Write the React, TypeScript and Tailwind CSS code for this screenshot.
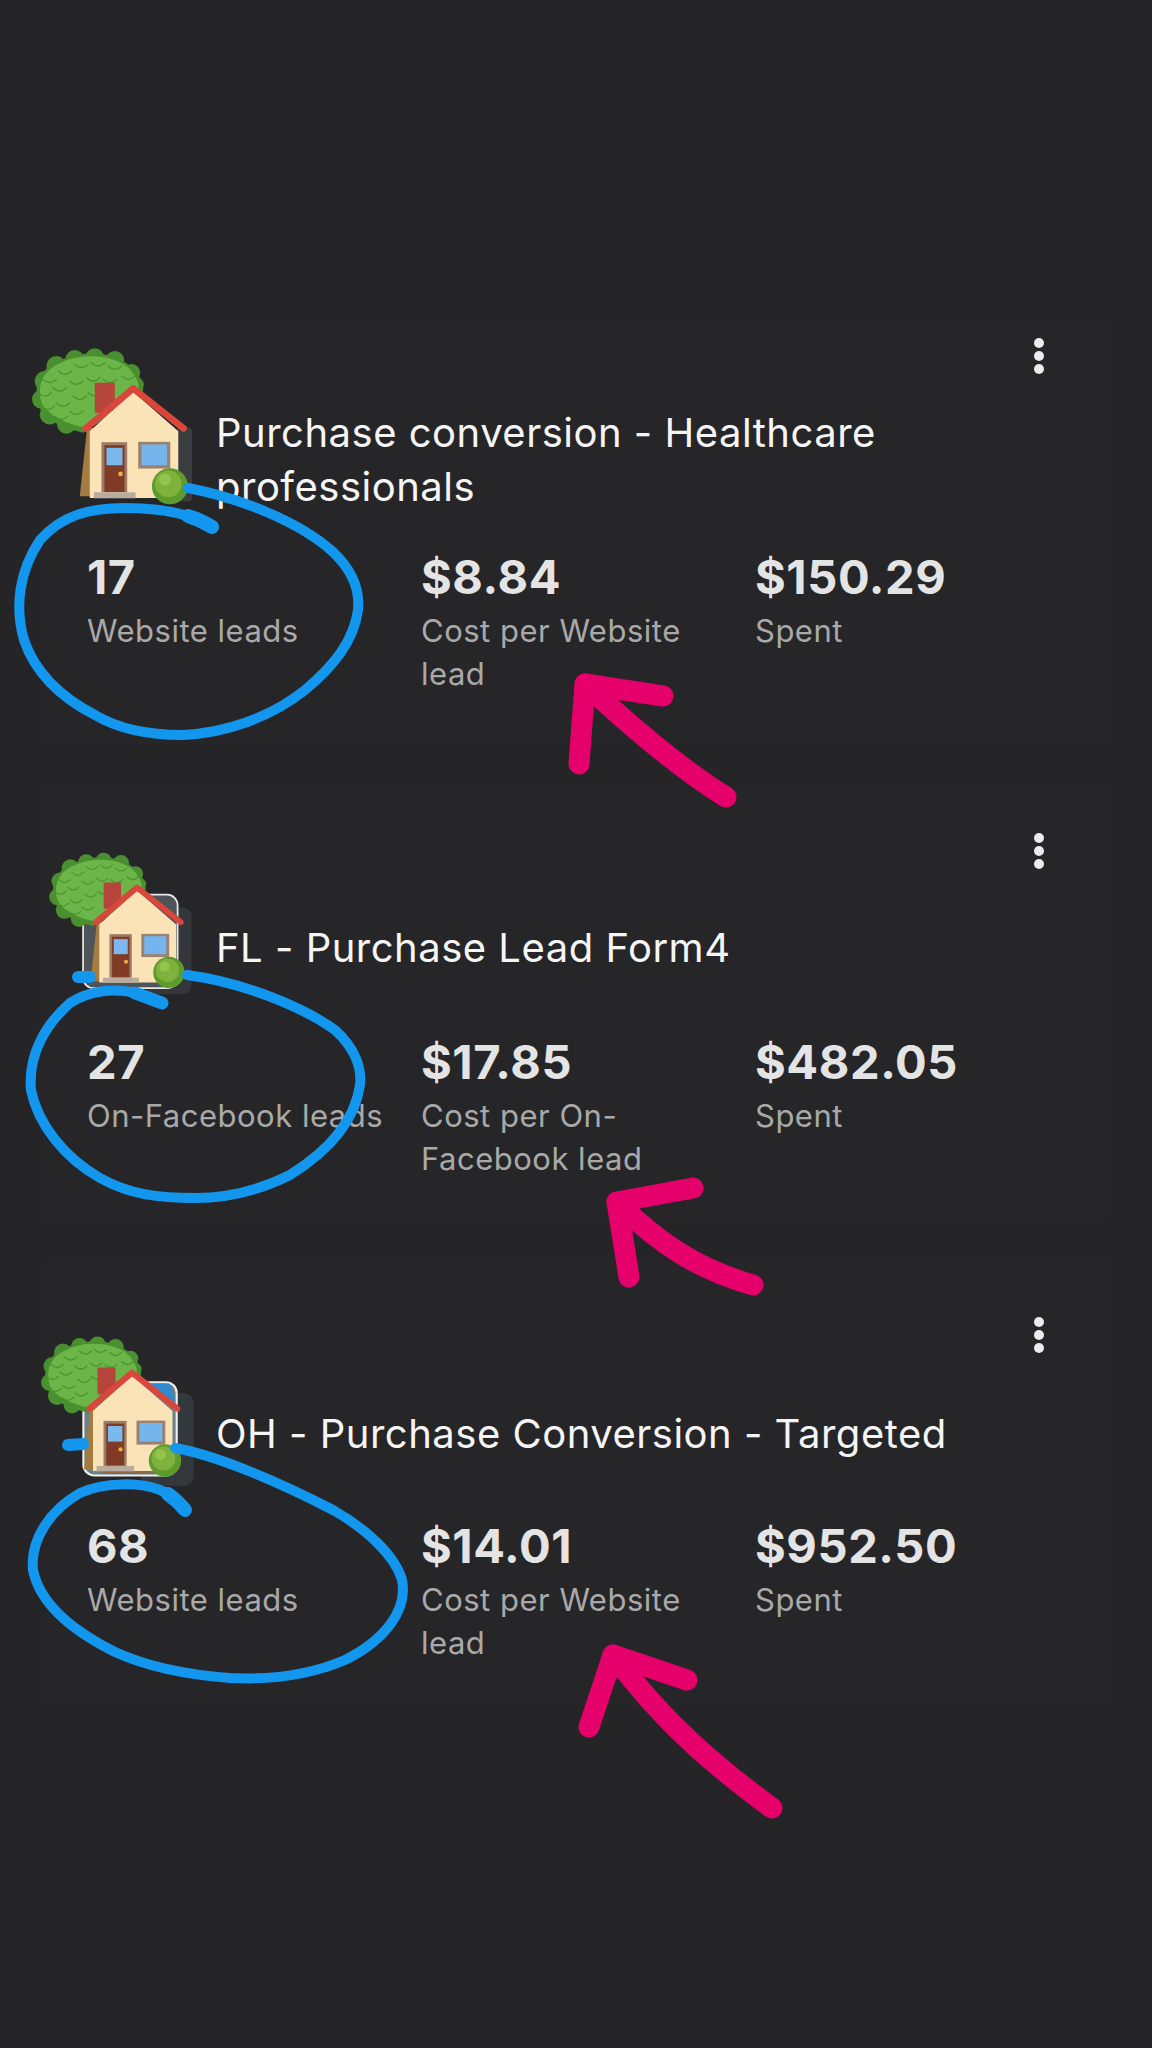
const font = "font-['Inter','Liberation_Sans',sans-serif]";

type Stat = { value: string; label: string };
type Campaign = { name: string; stats: Stat[]; thumb: number; cardClass: string; headClass: string; statsClass: string };

const campaigns: Campaign[] = [
  {
    name: 'Purchase conversion - Healthcare professionals',
    thumb: 0,
    cardClass: 'h-[425px] pt-[18px]',
    headClass: 'mt-[32px]',
    statsClass: 'mt-[34px]',
    stats: [
      { value: '17', label: 'Website leads' },
      { value: '$8.84', label: 'Cost per Website lead' },
      { value: '$150.29', label: 'Spent' },
    ],
  },
  {
    name: 'FL - Purchase Lead Form4',
    thumb: 1,
    cardClass: 'h-[438px] pt-[49px] mt-[39px]',
    headClass: 'mt-[52px]',
    statsClass: 'mt-[58px]',
    stats: [
      { value: '27', label: 'On-Facebook leads' },
      { value: '$17.85', label: 'Cost per On-Facebook lead' },
      { value: '$482.05', label: 'Spent' },
    ],
  },
  {
    name: 'OH - Purchase Conversion - Targeted',
    thumb: 2,
    cardClass: 'h-[445px] pt-[57px] mt-[38px]',
    headClass: 'mt-[54px]',
    statsClass: 'mt-[56px]',
    stats: [
      { value: '68', label: 'Website leads' },
      { value: '$14.01', label: 'Cost per Website lead' },
      { value: '$952.50', label: 'Spent' },
    ],
  },
];

// leaf scallops on the tree crown
const leaves = [
  [150, 175], [195, 150], [245, 130], [295, 125], [345, 135], [385, 165],
  [135, 215], [180, 200], [230, 180], [280, 170], [330, 175],
  [145, 255], [190, 245], [240, 225], [285, 215],
  [185, 285], [230, 270],
];

// lumps along the outer edge of the crown
const lumps = [
  [135, 180, 30], [125, 235, 28], [150, 280, 30], [200, 310, 28], [170, 135, 30],
  [225, 115, 28], [285, 110, 28], [345, 118, 28], [395, 155, 26], [412, 190, 20],
];

// no colour emoji font in the sandbox, so the house + tree is drawn
const HouseIcon = ({ thumb }: { thumb: number }) => {
  const scale = thumb === 0 ? 'w-[167px] left-[-11px] top-[-82px]' : thumb === 1 ? 'w-[145px] left-[6px] top-[-66px]' : 'w-[150px] left-[-2px] top-[-68px]';
  return (
    <svg viewBox="100 90 500 470" className={`absolute overflow-visible ${scale}`}>
      {thumb === 0 && <rect x="530" y="320" width="46" height="220" rx="10" fill="#3a3d3e" />}
      {thumb === 1 && (
        <g>
          <rect x="430" y="270" width="158" height="300" rx="30" fill="#33373a" />
          <rect x="214" y="227" width="326" height="322" rx="36" fill="#4e5457" stroke="#e8e8e8" strokeWidth="6" />
        </g>
      )}
      {thumb === 2 && (
        <g>
          <rect x="430" y="270" width="175" height="310" rx="30" fill="#33383c" />
          <rect x="238" y="234" width="311" height="311" rx="36" fill="#6f7f86" stroke="#f0f0f0" strokeWidth="7" />
          <path d="M440 238 L525 238 L545 300 Z" fill="#2d8bd0" />
          <path d="M300 505 L480 505 L480 540 L300 540 Z" fill="#8a6a4c" />
        </g>
      )}
      <path d="M240 525 L262 320 L300 320 L300 525 Z" fill="#a57c3f" />
      <g fill="#4a8f30">
        {lumps.map(([x, y, r]) => (
          <circle key={`${x}-${y}`} cx={x} cy={y} r={r} />
        ))}
      </g>
      <path d="M120 260 C95 200 120 140 180 120 C240 85 350 90 395 140 C420 160 432 190 430 210 L350 270 L250 335 C190 320 140 300 120 260 Z" fill="#4a8f30" />
      <path d="M128 250 C108 195 130 145 185 125 C245 95 345 100 390 145 C410 168 420 190 415 205 L340 258 L250 318 C195 305 150 285 128 250 Z" fill="#6cb548" />
      <g fill="none" stroke="#4a962f" strokeWidth="4" strokeLinecap="round">
        {leaves.map(([x, y]) => (
          <path key={`${x}-${y}`} d={`M${x - 20} ${y} q20 20 40 0`} />
        ))}
      </g>
      <rect x="285" y="185" width="60" height="90" fill="#b5453a" />
      <path d="M270 330 L400 212 L535 330 L535 530 L270 530 Z" fill="#fbe3b8" />
      <path d="M258 322 L400 202 L551 322" fill="none" stroke="#d8463c" strokeWidth="20" strokeLinejoin="round" strokeLinecap="round" />
      <rect x="305" y="363" width="77" height="150" fill="#9b7b66" />
      <rect x="314" y="372" width="60" height="140" fill="#7f3b25" />
      <rect x="320" y="380" width="48" height="52" fill="#7ab8ee" />
      <circle cx="362" cy="458" r="7" fill="#f0b040" />
      <rect x="415" y="362" width="96" height="80" fill="#9b8170" />
      <rect x="425" y="370" width="76" height="62" fill="#75b5ee" />
      <rect x="282" y="513" width="125" height="18" fill="#b9ac9e" />
      <circle cx="510" cy="495" r="54" fill="#5f9a2c" />
      <circle cx="505" cy="488" r="40" fill="#7fb23c" />
      <circle cx="495" cy="475" r="18" fill="#93c44c" />
    </svg>
  );
};

const App = () => (
  <div className={`relative min-h-[2048px] bg-[#252527] pt-[320px] ${font}`}>
    {campaigns.map((c) => (
      <div key={c.name} className={`mx-[44px] w-[1066px] bg-[#262628] ${c.cardClass}`}>
        <div className="flex justify-end pr-[66px]">
          <div className="flex h-[36px] flex-col justify-between">
            <span className="h-[10px] w-[10px] rounded-full bg-[#ececec]" />
            <span className="h-[10px] w-[10px] rounded-full bg-[#ececec]" />
            <span className="h-[10px] w-[10px] rounded-full bg-[#ececec]" />
          </div>
        </div>
        <div className={`flex items-center ${c.headClass}`}>
          <div className="relative h-[54px] w-[172px] shrink-0">
            <HouseIcon thumb={c.thumb} />
          </div>
          <p className="relative w-[760px] text-[40px] leading-[54px] tracking-[0.5px] text-[#f5f5f5]">{c.name}</p>
        </div>
        <div className={`grid grid-cols-[334px_334px_334px] pl-[43px] ${c.statsClass}`}>
          {c.stats.map((s) => (
            <div key={s.label}>
              <p className="text-[47px] leading-[58px] font-bold tracking-[0.6px] text-[#e4e4e4]">{s.value}</p>
              <p className="mt-[3px] w-[302px] text-[31px] leading-[43px] tracking-[0.5px] text-[#a9a9a9]">{s.label}</p>
            </div>
          ))}
        </div>
      </div>
    ))}

    {/* marker scribbles drawn on top of the screenshot */}
    <svg viewBox="0 0 1152 2048" className="pointer-events-none absolute top-0 left-0 h-[2048px] w-[1152px]" fill="none" strokeLinecap="round" strokeLinejoin="round">
      <g stroke="#1296ee" strokeWidth="10">
        <path d="M188 488 C240 498 300 522 333 552 C352 570 360 590 358 610 C354 640 335 665 305 690 C270 718 225 733 183 735 C150 735 120 730 95 715 C60 697 35 672 24 640 C14 605 20 570 40 540 C62 515 90 508 125 508 C160 508 190 513 212 527" />
        <path d="M188 516 Q201 520 212 527" strokeWidth="14" />
        <path d="M187 975 C240 982 300 1005 335 1030 C355 1048 362 1068 360 1085 C355 1120 330 1150 290 1175 C260 1190 230 1198 195 1198 C160 1198 130 1195 100 1178 C65 1158 38 1125 31 1090 C28 1055 45 1025 70 1003 C90 990 115 988 135 993 C145 996 155 1000 162 1003" />
        <path d="M135 993 L162 1003" strokeWidth="13" />
        <path d="M78 977 L90 977" strokeWidth="12" />
        <path d="M175 1448 C215 1455 275 1480 333 1510 C365 1528 395 1555 402 1580 C408 1610 385 1640 345 1660 C310 1675 270 1680 230 1678 C190 1675 150 1668 115 1652 C75 1632 40 1605 33 1570 C30 1540 50 1510 80 1493 C105 1482 140 1482 160 1490 C172 1495 180 1502 185 1510" />
        <path d="M168 1494 C175 1499 181 1505 185 1510" strokeWidth="14" />
        <path d="M68 1445 L83 1444" strokeWidth="12" />
      </g>
      <g stroke="#e5006b" strokeWidth="21">
        <path d="M726 797 C690 775 640 735 585 684" />
        <path d="M579 764 L585 684 L663 696" />
        <path d="M753 1285 C700 1270 660 1245 617 1202" />
        <path d="M629 1277 L617 1202 L693 1188" />
        <path d="M772 1808 C720 1770 665 1725 613 1655" />
        <path d="M589 1727 L613 1655 L687 1680" />
      </g>
    </svg>
  </div>
);

export default App;
